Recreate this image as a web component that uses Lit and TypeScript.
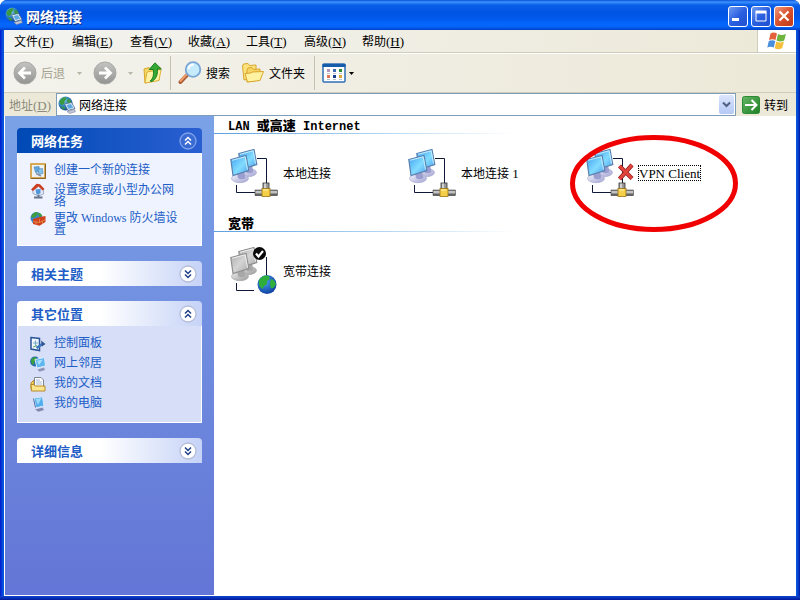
import { LitElement, html, svg, css, nothing, type TemplateResult } from "lit";
import { customElement, property } from "lit/decorators.js";

type Icon = () => TemplateResult;

/* ---------- icons ---------- */

const globeIcon: Icon = () => html`<svg width="18" height="18" viewBox="0 0 18 18" aria-hidden="true">
  <defs><radialGradient id="gl" cx=".35" cy=".3" r=".8"><stop offset="0" stop-color="#8fd3e8"/><stop offset=".5" stop-color="#2d7fc0"/><stop offset="1" stop-color="#123f86"/></radialGradient></defs>
  <circle cx="7.500" cy="7.500" r="7" fill="url(#gl)"/>
  <path d="M1.500 5Q4 .8 8 1.200Q9.500 3 6.500 5Q7 8.500 4 9Q1.500 8.500 1.500 5ZM9.500 3Q12.500 3 13.500 6Q12 8 10 7Q8.500 5 9.500 3ZM3 10.500Q6 10 7 12Q6.500 14 5 13.500Z" fill="#3a9a40"/>
  <path d="M6.500 8L13.500 6.500L17 12.500L10 14.500Z" fill="#e6f4fd" stroke="#4d6a8c" stroke-width=".8"/>
  <path d="M8.300 9L13 8L15.200 11.800L10.600 13Z" fill="#5fa8e2"/>
  <path d="M9 15.500L16.500 13.300L17.300 15.800L11.500 17.500Z" fill="#c3c8da" stroke="#7c8399" stroke-width=".6"/>
</svg>`;

const arrowIcon = (forward: boolean) => html`<svg width="24" height="24" viewBox="0 0 24 24" aria-hidden="true">
  <defs><linearGradient id="gr" x2="0" y2="1"><stop offset="0" stop-color="#c4c4c2"/><stop offset="1" stop-color="#939391"/></linearGradient></defs>
  <circle cx="12" cy="12" r="11" fill="url(#gr)" stroke="#a7a7a4"/>
  <path d=${forward ? "M6 12H17M12 6.500L17.500 12L12 17.500" : "M18 12H7M12 6.500L6.500 12L12 17.500"} fill="none" stroke="#fff" stroke-width="2.800"/>
</svg>`;

const upIcon: Icon = () => html`<svg width="20" height="22" viewBox="0 0 20 22" aria-hidden="true">
  <path d="M1 7L6 5.500L7.500 7L17 5.500L16 18L2 21Z" fill="#f6d667" stroke="#d6a728"/>
  <path d="M4 10L18 7.500L16 18.500L2 21Z" fill="#fff3a8" stroke="#dcb03a"/>
  <path d="M7 19Q11.500 16 10.300 7.500H6.200L12 .8L18.300 7H14.300Q15.500 15.500 9 19.500Z" fill="#35a835" stroke="#147a1b" stroke-width=".9"/>
</svg>`;

const searchIcon: Icon = () => html`<svg width="24" height="24" viewBox="0 0 24 24" aria-hidden="true">
  <path d="M9.500 13.500L2.500 21" stroke="#a85a34" stroke-width="4" stroke-linecap="round"/>
  <path d="M9 13L2.500 20" stroke="#ef9f6c" stroke-width="2" stroke-linecap="round"/>
  <circle cx="15" cy="8.500" r="7.300" fill="#c6ecfb" stroke="#7ba6d8" stroke-width="1.800"/>
  <path d="M10.500 8Q11 4 15.500 3.500" fill="none" stroke="#fff" stroke-width="2"/>
</svg>`;

const foldersIcon: Icon = () => html`<svg width="24" height="22" viewBox="0 0 24 22" aria-hidden="true">
  <path d="M1.500 4L2.500 2L7 1.500L8.500 3.500L15 3V15L3 18Z" fill="#fbe27c" stroke="#d8a62e"/>
  <path d="M6 8L7 6L11 5.500L12.500 7.500L19 7V18L6 20Z" fill="#f7d463" stroke="#d8a62e"/>
  <path d="M4 11.500L10 11L11 10L22.500 9.500L19 18.500L6.500 20Z" fill="#fff2a2" stroke="#d8a62e"/>
</svg>`;

const viewsIcon: Icon = () => html`<svg width="24" height="20" viewBox="0 0 24 20" aria-hidden="true">
  <rect x="1" y="1" width="22" height="18" rx="1" fill="#fff" stroke="#2f6fb5" stroke-width="1.500"/>
  <path d="M.5 1H23.500V4H.5Z" fill="#155cab"/>
  <path d="M5 6h3v3H5Z" fill="#b596b8"/><path d="M11 6h3v3H11Z" fill="#3d6bb0"/><path d="M17 6h3v3H17Z" fill="#2e8b36"/>
  <path d="M5 12h3v3H5Z" fill="#e07658"/><path d="M11 12h3v3H11Z" fill="#173e8c"/><path d="M17 12h3v3H17Z" fill="#dba53a"/>
  <path d="M5 10.500h3M11 10.500h3M17 10.500h3M5 16.500h3M11 16.500h3M17 16.500h3" stroke="#b9c2cf"/>
</svg>`;

const caretIcon: Icon = () => html`<svg width="5" height="3" viewBox="0 0 5 3" aria-hidden="true"><path d="M0 0H5L2.500 3Z" fill="currentColor"/></svg>`;

const flagIcon: Icon = () => html`<svg width="20" height="20" viewBox="0 0 20 20" aria-hidden="true">
  <path d="M3.500 2.500Q6.500 .5 10 2.500L8.500 9Q5.500 7.500 2 9Z" fill="#e2603a"/>
  <path d="M11 3Q14.500 5 19 3L17.200 9.500Q13.500 11.500 9.500 9.500Z" fill="#6fb43f"/>
  <path d="M1.800 10Q5.200 8.500 8.300 10L6.800 16.500Q3.500 15 .3 16.500Z" fill="#4a8fdd"/>
  <path d="M9.300 10.500Q13 12.500 17 10.500L15.200 17Q11.500 19.500 7.700 17.300Z" fill="#f4bf3a"/>
</svg>`;

const goIcon: Icon = () => html`<svg width="18" height="18" viewBox="0 0 18 18" aria-hidden="true">
  <defs><linearGradient id="go" x2="1" y2="1"><stop offset="0" stop-color="#66b766"/><stop offset="1" stop-color="#1d7f24"/></linearGradient></defs>
  <rect x=".5" y=".5" width="17" height="17" rx="2" fill="url(#go)" stroke="#2c8a34"/>
  <path d="M3 9H14M9.500 4L14.500 9L9.500 14" fill="none" stroke="#fff" stroke-width="2"/>
</svg>`;

const newConnIcon: Icon = () => html`<svg width="16" height="16" viewBox="0 0 16 16" aria-hidden="true">
  <rect x="1" y="1" width="14" height="14" fill="#eef3f2" stroke="#d3a245" stroke-width="1.800"/>
  <path d="M15.500 1V15.500H1" fill="none" stroke="#8b6526"/>
  <path d="M4 4L9 3.500L10 8.500L5.500 9.500Z" fill="#5fa9e0" stroke="#4f82b5" stroke-width=".6"/>
  <path d="M8 6L12.500 5.500L13 10.500L9 11.500Z" fill="#82c3ee" stroke="#4f82b5" stroke-width=".6"/>
  <path d="M6 10.500L11 13" stroke="#8990a5" stroke-width="1.500"/>
</svg>`;

const homeNetIcon: Icon = () => html`<svg width="16" height="16" viewBox="0 0 16 16" aria-hidden="true">
  <path d="M2.500 6L8 2L13.500 6V11L8.500 13L3 10.500Z" fill="#e3eafb" stroke="#8591b2" stroke-width=".7"/>
  <path d="M1 6.500L6.500 .8L10 1.200L14.500 6L12.500 7.500L8.500 3.500L3 8Z" fill="#cc3f24"/>
  <path d="M5.500 6.500L10.500 6V10.500L6.500 11.500Z" fill="#4f97d8"/>
  <path d="M8.500 11.500V14M4 14.500H12.500" stroke="#65758c" stroke-width="1.800"/>
</svg>`;

const firewallIcon: Icon = () => html`<svg width="16" height="16" viewBox="0 0 16 16" aria-hidden="true">
  <circle cx="6.500" cy="7" r="6" fill="#3b86c9"/>
  <path d="M1 6Q3 1 7 1Q9 3 6 5Q4 8 1 6ZM8 2Q11 2 12.500 5L9 6Z" fill="#3f9f3c"/>
  <path d="M3 8L10 6L15.500 5V11L9.500 14.800L3 13Z" fill="#cf431c"/>
  <path d="M3 10.500L9.500 11.500L15.500 8.500M9.500 8V11.500M6 11V13.500M12.500 10V13" fill="none" stroke="#ef9a5e" stroke-width=".7"/>
</svg>`;

const controlIcon: Icon = () => html`<svg width="16" height="16" viewBox="0 0 16 16" aria-hidden="true">
  <path d="M1 1.500L9.500 2.500V14.500L1 13Z" fill="#f2f7fd" stroke="#2c5396" stroke-width="1.500"/>
  <path d="M5.500 4.500V9.500M3 7H8" stroke="#79a9c9" stroke-width="1.200"/>
  <path d="M3 11L7 9.500" stroke="#58a35b"/>
  <path d="M6.500 12L12.500 8" stroke="#3c78bd" stroke-width="2.600"/>
  <path d="M11 4.500L15.500 8L12 10.500Z" fill="#2f5690"/>
</svg>`;

const placesIcon: Icon = () => html`<svg width="16" height="16" viewBox="0 0 16 16" aria-hidden="true">
  <circle cx="5" cy="5.500" r="4.900" fill="#2068b0"/><path d="M.8 4Q3 .8 6 1Q7 4 4 6Q5 9 2 8.500Z" fill="#3ca03e"/>
  <path d="M5 3.500L14.500 1.500L15.500 10L7 12Z" fill="#5fb6ee" stroke="#dceafa"/>
  <path d="M7 4.800L13 3.500L9 9Z" fill="#a9e0fb"/>
  <path d="M7.500 13.500L14 11.500L15 14L9.500 15.700Z" fill="#8d94b8"/>
</svg>`;

const documentsIcon: Icon = () => html`<svg width="16" height="16" viewBox="0 0 16 16" aria-hidden="true">
  <path d="M1 7L4 4V13H1Z" fill="#f8d55b" stroke="#b98a24"/>
  <path d="M4.500 1.500H11L13.500 4V12H4.500Z" fill="#fff" stroke="#7d8496"/>
  <path d="M6 4H10M6 6H12M6 8H12" stroke="#8fa8cf" stroke-width=".8"/>
  <path d="M1 8.500H4L5 10H15V15H1.500Z" fill="#fbe68d" stroke="#b98a24"/>
</svg>`;

const computerIcon: Icon = () => html`<svg width="16" height="16" viewBox="0 0 16 16" aria-hidden="true">
  <path d="M4 2L12.500 .8L14 10L6 11.800Z" fill="#52aeee" stroke="#d9e7f8"/>
  <path d="M5.500 3L11.500 2L8 9Z" fill="#9bdafa"/>
  <path d="M3.500 2.500L5.500 11.500" stroke="#4b6da6"/>
  <path d="M5 13.500L12.500 11.500L14 14L8.500 15.800Z" fill="#8188b0"/>
</svg>`;

type ConnKind = "lan" | "failed" | "broadband";

const monitor = (gray: boolean) => svg`
  <ellipse cx="10" cy="28.500" rx="8.500" ry="4.200" fill=${gray ? "url(#baseg)" : "url(#base)"} stroke=${gray ? "#a0a0a0" : "#a3a6cf"} stroke-width=".6"/>
  <path d="M7 23L14 21.500L15.500 28Q11 30.500 8 28Z" fill=${gray ? "#a8a8a8" : "#9a9fd0"}/>
  <path d="M.8 9.500L16 5.500L18.800 20.500L3 25.500Z" fill=${gray ? "url(#scrg)" : "url(#scr)"} stroke=${gray ? "#8f8f8f" : "#5b80ae"} stroke-width="1.200"/>
  <path d="M2 10.300L15.200 6.800L17.500 19.500" fill="none" stroke=${gray ? "#eee" : "#c4ecff"}/>`;

const adapter = () => svg`
  <rect x="33" y="34" width="6" height="8" fill="#999" stroke="#333" stroke-width=".8"/>
  <path d="M35 34.500V40" stroke="#e5e5e5" stroke-width="1.500"/>
  <rect x="25" y="41" width="22.500" height="5.500" fill="url(#pipe)" stroke="#333" stroke-width=".5"/>
  <rect x="32" y="39.500" width="8" height="8" fill="#f5cf48" stroke="#9a7416" stroke-width=".8"/>
  <path d="M33 41H38" stroke="#fff4b5"/>`;

const cross = () => svg`
  <path d="M33.500 17L46 29.500M46 16L33.500 30" stroke="#8f1d1d" stroke-width="4.200"/>
  <path d="M33.500 17L46 29.500M46 16L33.500 30" stroke="#e0443c" stroke-width="2.800"/>`;

const orb = () => svg`
  <circle cx="37" cy="37.500" r="9.500" fill="url(#orb)"/>
  <path d="M29 33Q33 27 39 29Q41 32 37 34Q38 38 34 39Q33 43 31 41Q28 38 29 33ZM41 32Q45 33 46 37Q44 42 41 41Q39 38 41 32Z" fill="#2fae3c"/>
  <circle cx="29.500" cy="6.500" r="6.500" fill="#0a0a0a"/>
  <path d="M26 6.500L28.500 9.500L33 4" fill="none" stroke="#fff" stroke-width="2.200"/>`;

const connectionIcon = (kind: ConnKind) => {
  const gray = kind === "broadband";
  return html`<svg width="48" height="48" viewBox="0 0 48 48" aria-hidden="true">
    <defs>
      <linearGradient id="scr" x2="1" y2="1"><stop offset="0" stop-color="#3f9ff0"/><stop offset=".55" stop-color="#82dcff"/><stop offset="1" stop-color="#4b9dea"/></linearGradient>
      <linearGradient id="scrg" x2="1" y2="1"><stop offset="0" stop-color="#adadad"/><stop offset=".5" stop-color="#d4d4d4"/><stop offset="1" stop-color="#aaa"/></linearGradient>
      <linearGradient id="base" x2="1" y2="1"><stop offset="0" stop-color="#f4f4fc"/><stop offset="1" stop-color="#a2a3d2"/></linearGradient>
      <linearGradient id="baseg" x2="1" y2="1"><stop offset="0" stop-color="#eee"/><stop offset="1" stop-color="#999"/></linearGradient>
      <linearGradient id="pipe" x2="0" y2="1"><stop offset="0" stop-color="#666"/><stop offset=".35" stop-color="#ddd"/><stop offset="1" stop-color="#333"/></linearGradient>
      <radialGradient id="orb" cx=".4" cy=".35" r=".7"><stop offset="0" stop-color="#4b9ff0"/><stop offset="1" stop-color="#0b3c9c"/></radialGradient>
    </defs>
    <path d=${gray ? "M36.500 10V30M6.500 36V43.500H24" : "M27 9.500H36.500V34M6.500 36V43.500H26"} fill="none" stroke="#101838"/>
    <g transform="translate(8 -5)">${monitor(gray)}</g>
    <g transform="translate(0 1)">${monitor(gray)}</g>
    ${gray ? orb() : adapter()}
    ${kind === "failed" ? cross() : nothing}
  </svg>`;
};

/* ---------- shared styles ---------- */

const base = css`
  * { box-sizing: border-box; }
  button, a, select {
    font: inherit; color: inherit; background: none; border: 0; padding: 0; margin: 0; text-decoration: none;
  }
  svg { display: block; flex: none; }
  .latin { font-family: "Liberation Serif", serif; font-size: 13px; line-height: 1px; }
`;

/* Latin runs are set in their own face beside the ideographs. */
const mixed = (text: string) =>
  text.split(/([\x20-\x7e]+)/).map((part) =>
    /^[\x20-\x7e]+$/.test(part) ? html`<span class="latin">${part}</span>` : part);

/* ---------- collapsible side panel ---------- */

interface Task { label: string; icon: Icon; }

@customElement("side-panel")
class SidePanel extends LitElement {
  @property() heading = "";
  @property({ type: Boolean }) primary = false;
  @property({ type: Boolean }) open = false;
  @property({ attribute: false }) tasks: Task[] = [];

  static styles = [base, css`
    :host { display: block; }
    .head {
      display: flex; align-items: center; justify-content: space-between;
      width: 100%; height: 25px; padding: 0 5px 0 14px;
      border-radius: 4px 4px 0 0;
      font-size: 13px; font-weight: 700; color: #215dc6;
      background: linear-gradient(90deg, #fff 45%, #c6d3f7);
    }
    .head.primary { color: #fff; background: linear-gradient(90deg, #0049b5, #2a5fd2); }
    .body {
      display: flex; flex-direction: column; gap: 4px;
      padding: 10px 12px; border: 1px solid #fff; border-top: 0;
      background: #d6dff7;
    }
    .body.primary { background: #eff3ff; }
    .task {
      display: flex; gap: 8px; min-height: 16px; line-height: 12px; color: #215dc6;
    }
    .label { max-width: 130px; }
    .label .latin { font-size: 12px; }
  `];

  private toggle() { this.open = !this.open; }

  render() {
    const tone = this.primary ? "primary" : "";
    const ring = this.primary ? "#7fa3ea" : "#b5bdd8";
    const fill = this.primary ? "#3a6bd3" : "#fff";
    const mark = this.primary ? "#fff" : "#1f3f86";
    const d = this.open
      ? "M6 8.500L9 5.500L12 8.500M6 12.500L9 9.500L12 12.500"
      : "M6 5.500L9 8.500L12 5.500M6 9.500L9 12.500L12 9.500";
    return html`
      <button class="head ${tone}" aria-expanded=${this.open} @click=${this.toggle}>
        <span>${this.heading}</span>
        <svg width="18" height="18" viewBox="0 0 18 18" aria-hidden="true">
          <circle cx="9" cy="9" r="8" fill=${fill} stroke=${ring} stroke-width="1.300"/>
          <path d=${d} fill="none" stroke=${mark} stroke-width="1.500"/>
        </svg>
      </button>
      ${this.open ? html`<div class="body ${tone}">
        ${this.tasks.map((t) => html`<a class="task" href="#">${t.icon()}<span class="label">${mixed(t.label)}</span></a>`)}
      </div>` : nothing}`;
  }
}

/* ---------- window ---------- */

interface Connection { name: string; kind: ConnKind; selected?: boolean; }

@customElement("app-root")
class AppRoot extends LitElement {
  static styles = [base, css`
    :host {
      display: flex; flex-direction: column; min-height: 100vh; overflow: hidden;
      font: 12px/14px "Noto Sans CJK SC", sans-serif; color: #000;
      background: linear-gradient(90deg, #0019cf, #0855dd 3px, #0855dd calc(100% - 3px), #0019a5);
      border-radius: 7px 7px 0 0;
    }
    .title {
      display: flex; align-items: center; gap: 3px; height: 30px; padding: 2px 6px 0 5px;
      background: linear-gradient(#0a50d8, #3c93ff 2px, #0a5fe8 5px, #0054e3 12px, #0058ea 18px, #0566fd 24px, #0563f8 27px, #0040c4);
    }
    .title h1 {
      flex: 1; margin: 0; font-size: 14px; font-weight: 700; color: #fff;
      text-shadow: 1px 1px #0a2a80;
    }
    .win {
      display: grid; place-items: center; width: 20px; height: 21px;
      border: 1px solid #fff; border-radius: 3px;
      background: linear-gradient(135deg, #6f9bf3, #2a5fe0 50%, #2050d0);
    }
    .win.close { background: linear-gradient(135deg, #ee9a7f, #d8502c 50%, #c03a18); }
    .frame {
      flex: 1; display: flex; flex-direction: column; margin: 0 4px;
      background: #ece9d8;
    }
    .menu {
      display: flex; align-items: stretch; height: 23px; border-bottom: 1px solid #cfccbb;
      background: linear-gradient(90deg, #f3f3f0, #ece9d8);
    }
    .menu nav { flex: 1; display: flex; align-items: center; gap: 16px; padding-left: 10px; }
    .menu nav button { width: 42px; text-align: left; white-space: nowrap; }
    .menu u { text-underline-offset: 1px; }
    .logo { display: grid; place-items: center; width: 39px; background: #fff; border-left: 1px solid #cfccbb; }
    .tools {
      display: flex; align-items: center; height: 40px; padding-left: 9px;
      border-top: 1px solid #fff; border-bottom: 1px solid #cfccbb;
      background: linear-gradient(90deg, #f3f2ec, #ece9d8);
    }
    .tool { display: flex; align-items: center; gap: 4px; }
    .tool.off { color: #a5a391; }
    .drop { display: grid; place-items: center; width: 26px; height: 24px; }
    .drop.wide { width: 28px; }
    .drop.off { color: #b8b6a6; }
    .drop.views { width: 11px; }
    .rule { width: 1px; height: 34px; background: #c5c2b2; margin: 0 7px; }
    .rule.spaced { margin-left: 9px; }
    .gap { margin-left: 11px; }
    .address { display: flex; align-items: center; height: 23px; padding: 0 8px 0 5px; }
    .address label { width: 47px; color: #8b897b; }
    .combo {
      flex: 1; display: flex; align-items: center; gap: 3px; height: 23px; padding: 0 1px;
      border: 1px solid #7f9db9; background: #fff;
    }
    .combo select { flex: 1; appearance: none; outline: 0; height: 20px; }
    .thumb {
      display: grid; place-items: center; width: 15px; height: 19px;
      border-radius: 2px; background: linear-gradient(#dbe5fd, #b5c9f5);
    }
    .go { display: flex; align-items: center; gap: 4px; margin-left: 6px; }
    .content { flex: 1; display: flex; background: #fff; border: solid #fff; border-width: 0 0 1px 1px; }
    aside {
      display: flex; flex-direction: column; gap: 15px; width: 209px; flex: none; padding: 12px;
      background: linear-gradient(#7ba2e7, #6375d6);
    }
    main { flex: 1; min-width: 0; }
    h2 {
      height: 18px; margin: 0; padding-left: 14px; line-height: 18px; font-size: 13px; font-weight: 900;
      background: linear-gradient(90deg, #5aa0e0, #a9d0f2 150px, #fff 300px) bottom / 100% 1px no-repeat;
    }
    h2 .latin { font-family: "Liberation Mono", monospace; font-size: 12px; }
    .items { display: grid; grid-template-columns: repeat(auto-fill, 178px); padding: 15px 16px 17px; }
    .item { position: relative; display: flex; align-items: center; gap: 4px; height: 48px; text-align: left; }
    .name { border: 1px dotted transparent; height: 16px; }
    .name.selected { border-color: #000; }
    .mark { position: absolute; left: -16px; top: -14px; pointer-events: none; }
    .base { height: 4px; background: linear-gradient(#0f45d0, #001b9a); }
  `];

  private menus: [string, string][] = [
    ["文件", "F"], ["编辑", "E"], ["查看", "V"], ["收藏", "A"], ["工具", "T"], ["高级", "N"], ["帮助", "H"],
  ];

  private groups: { title: string; items: Connection[] }[] = [
    { title: "LAN 或高速 Internet", items: [
      { name: "本地连接", kind: "lan" },
      { name: "本地连接 1", kind: "lan" },
      { name: "VPN Client", kind: "failed", selected: true },
    ] },
    { title: "宽带", items: [{ name: "宽带连接", kind: "broadband" }] },
  ];

  private tasks: Task[] = [
    { label: "创建一个新的连接", icon: newConnIcon },
    { label: "设置家庭或小型办公网络", icon: homeNetIcon },
    { label: "更改 Windows 防火墙设置", icon: firewallIcon },
  ];

  private places: Task[] = [
    { label: "控制面板", icon: controlIcon },
    { label: "网上邻居", icon: placesIcon },
    { label: "我的文档", icon: documentsIcon },
    { label: "我的电脑", icon: computerIcon },
  ];

  private item(c: Connection) {
    return html`<button class="item">
      ${connectionIcon(c.kind)}
      <span class="name ${c.selected ? "selected" : ""}">${mixed(c.name)}</span>
      ${c.selected ? html`<svg class="mark" width="168" height="97" viewBox="0 0 168 97" aria-hidden="true">
        <ellipse cx="84" cy="48.500" rx="81.500" ry="46" fill="none" stroke="#f00000" stroke-width="5"/></svg>` : nothing}
    </button>`;
  }

  render() {
    return html`
      <header class="title">
        ${globeIcon()}
        <h1>网络连接</h1>
        <button class="win" aria-label="最小化"><svg width="14" height="14" viewBox="0 0 14 14"><path d="M1 10.500H8" stroke="#fff" stroke-width="3"/></svg></button>
        <button class="win" aria-label="最大化"><svg width="14" height="14" viewBox="0 0 14 14"><path d="M2 3.500H12V12H2Z" fill="none" stroke="#fff"/><path d="M1.500 3H12.500" stroke="#fff" stroke-width="3"/></svg></button>
        <button class="win close" aria-label="关闭"><svg width="14" height="14" viewBox="0 0 14 14"><path d="M2.500 2.500L11.500 11.500M11.500 2.500L2.500 11.500" stroke="#fff" stroke-width="2.200"/></svg></button>
      </header>
      <div class="frame">
        <div class="menu">
          <nav>${this.menus.map(([t, k]) => html`<button>${t}<span class="latin">(<u>${k}</u>)</span></button>`)}</nav>
          <div class="logo">${flagIcon()}</div>
        </div>
        <div class="tools">
          <button class="tool off">${arrowIcon(false)}后退</button>
          <button class="drop wide off" aria-label="后退列表">${caretIcon()}</button>
          <button class="tool off" aria-label="前进">${arrowIcon(true)}</button>
          <button class="drop off" aria-label="前进列表">${caretIcon()}</button>
          <button class="tool" aria-label="向上">${upIcon()}</button>
          <span class="rule"></span>
          <button class="tool">${searchIcon()}搜索</button>
          <button class="tool gap">${foldersIcon()}文件夹</button>
          <span class="rule spaced"></span>
          <button class="tool" aria-label="查看">${viewsIcon()}</button>
          <button class="drop views" aria-label="查看列表">${caretIcon()}</button>
        </div>
        <div class="address">
          <label for="addr">地址<span class="latin">(<u>D</u>)</span></label>
          <div class="combo">
            ${globeIcon()}
            <select id="addr"><option>网络连接</option></select>
            <span class="thumb"><svg width="9" height="7" viewBox="0 0 9 7" aria-hidden="true"><path d="M1 1.500L4.500 5L8 1.500" fill="none" stroke="#4d6185" stroke-width="2"/></svg></span>
          </div>
          <button class="go">${goIcon()}转到</button>
        </div>
        <div class="content">
          <aside>
            <side-panel primary open heading="网络任务" .tasks=${this.tasks}></side-panel>
            <side-panel heading="相关主题"></side-panel>
            <side-panel open heading="其它位置" .tasks=${this.places}></side-panel>
            <side-panel heading="详细信息"></side-panel>
          </aside>
          <main>
            ${this.groups.map((g) => html`<section>
              <h2>${mixed(g.title)}</h2>
              <div class="items">${g.items.map((c) => this.item(c))}</div>
            </section>`)}
          </main>
        </div>
      </div>
      <div class="base"></div>`;
  }
}
